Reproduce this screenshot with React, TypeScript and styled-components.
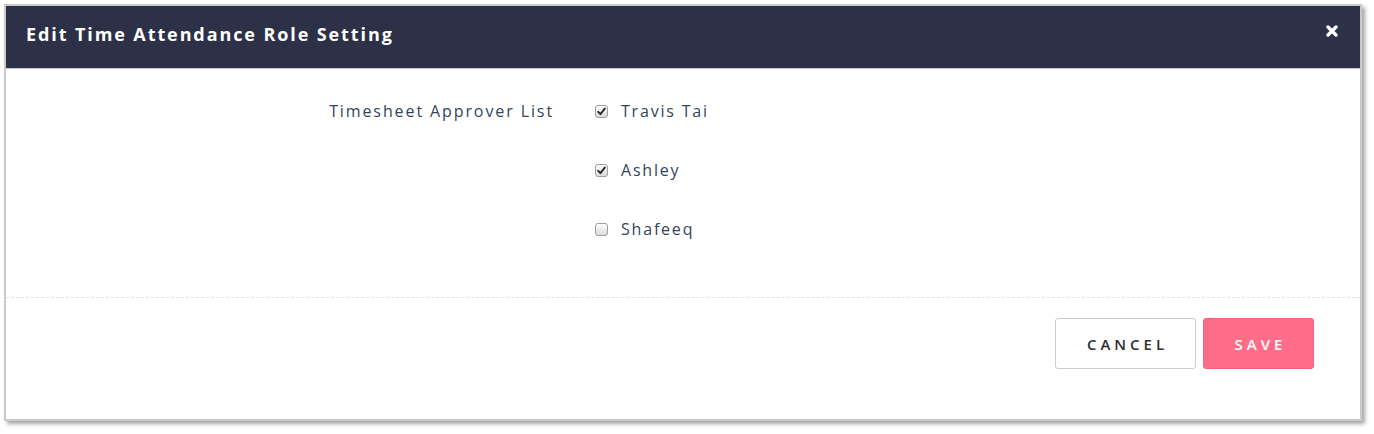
import React, { FC } from 'react'
import styled, { createGlobalStyle } from 'styled-components'

const GlobalStyle = createGlobalStyle`
    html, body {
        margin: 0;
        padding: 0;
        background: #ffffff;
    }
    body {
        font-family: 'Open Sans', 'Liberation Sans', sans-serif;
    }
`

const Page = styled.div`
    padding: 4px 0 0 4px;
    width: 1374px;
    height: 434px;
    box-sizing: border-box;
`

const Modal = styled.div`
    width: 1354px;
    border: 2px solid #c9c9c9;
    background: #ffffff;
    box-shadow: 3px 3px 4px rgba(0, 0, 0, 0.35);
`

const Header = styled.div`
    display: flex;
    align-items: center;
    justify-content: space-between;
    height: 63px;
    padding: 0 22px 6px 20px;
    box-sizing: border-box;
    background: #2c3148;
    border-bottom: 1px solid #c9ccd4;
`

const Title = styled.h4`
    margin: 0;
    font-size: 18px;
    font-weight: 700;
    letter-spacing: 1.9px;
    color: #ffffff;
`

const CloseButton = styled.button`
    display: flex;
    padding: 0;
    margin-top: -6px;
    border: none;
    background: none;
    cursor: pointer;
`

const Body = styled.div`
    display: grid;
    grid-template-columns: 548px 1fr;
    column-gap: 41px;
    padding: 30px 0 56px;
    border-bottom: 1px dashed #e3e3e3;
`

const FieldLabel = styled.label`
    text-align: right;
    font-size: 16px;
    letter-spacing: 1.9px;
    line-height: 24px;
    color: #34445a;
`

const OptionList = styled.div`
    display: flex;
    flex-direction: column;
    gap: 35px;
`

const Option = styled.label`
    display: flex;
    align-items: center;
    gap: 13px;
    height: 24px;
    font-size: 16px;
    letter-spacing: 1.8px;
    color: #34445a;
    cursor: pointer;
`

const Box = styled.span`
    display: flex;
    align-items: center;
    justify-content: center;
    width: 11px;
    height: 11px;
    border: 1px solid #9d9d9d;
    border-radius: 3px;
    background: linear-gradient(#fcfcfc, #dcdcdc);
    box-shadow: inset 0 1px 0 #ffffff;
`

const Footer = styled.div`
    display: flex;
    justify-content: flex-end;
    gap: 7px;
    padding: 20px 46px 50px 0;
`

const Button = styled.button<{ primary?: boolean }>`
    height: 51px;
    width: ${(props) => (props.primary ? '111px' : '141px')};
    border-radius: 3px;
    border: 1px solid ${(props) => (props.primary ? '#f4637e' : '#cccccc')};
    background: ${(props) => (props.primary ? '#ff6d88' : '#ffffff')};
    color: ${(props) => (props.primary ? '#ffffff' : '#2e2e2e')};
    font-family: 'Open Sans', 'Liberation Sans', sans-serif;
    font-size: 15px;
    font-weight: 600;
    letter-spacing: 4px;
    padding: 0 0 0 4px;
    cursor: pointer;
`

type CheckProps = { checked: boolean }

const Check: FC<CheckProps> = ({ checked }) => (
    <Box>
        {checked && (
            <svg width="9" height="9" viewBox="0 0 9 9">
                <path
                    d="M1.2 4.8 L3.4 7.2 L7.8 1.6"
                    fill="none"
                    stroke="#2a2a2a"
                    strokeWidth="1.9"
                    strokeLinecap="round"
                    strokeLinejoin="round"
                />
            </svg>
        )}
    </Box>
)

const approvers = [
    { name: 'Travis Tai', checked: true },
    { name: 'Ashley', checked: true },
    { name: 'Shafeeq', checked: false }
]

const App: FC = () => {
    return (
        <Page>
            <GlobalStyle />
            <Modal>
                <Header>
                    <Title>Edit Time Attendance Role Setting</Title>
                    <CloseButton aria-label="close">
                        <svg width="12" height="12" viewBox="0 0 12 12">
                            <path
                                d="M2 2 L10 10 M10 2 L2 10"
                                stroke="#ffffff"
                                strokeWidth="3.4"
                                strokeLinecap="round"
                            />
                        </svg>
                    </CloseButton>
                </Header>
                <Body>
                    <FieldLabel>Timesheet Approver List</FieldLabel>
                    <OptionList>
                        {approvers.map((a) => (
                            <Option key={a.name}>
                                <Check checked={a.checked} />
                                {a.name}
                            </Option>
                        ))}
                    </OptionList>
                </Body>
                <Footer>
                    <Button>CANCEL</Button>
                    <Button primary>SAVE</Button>
                </Footer>
            </Modal>
        </Page>
    )
}

export default App
